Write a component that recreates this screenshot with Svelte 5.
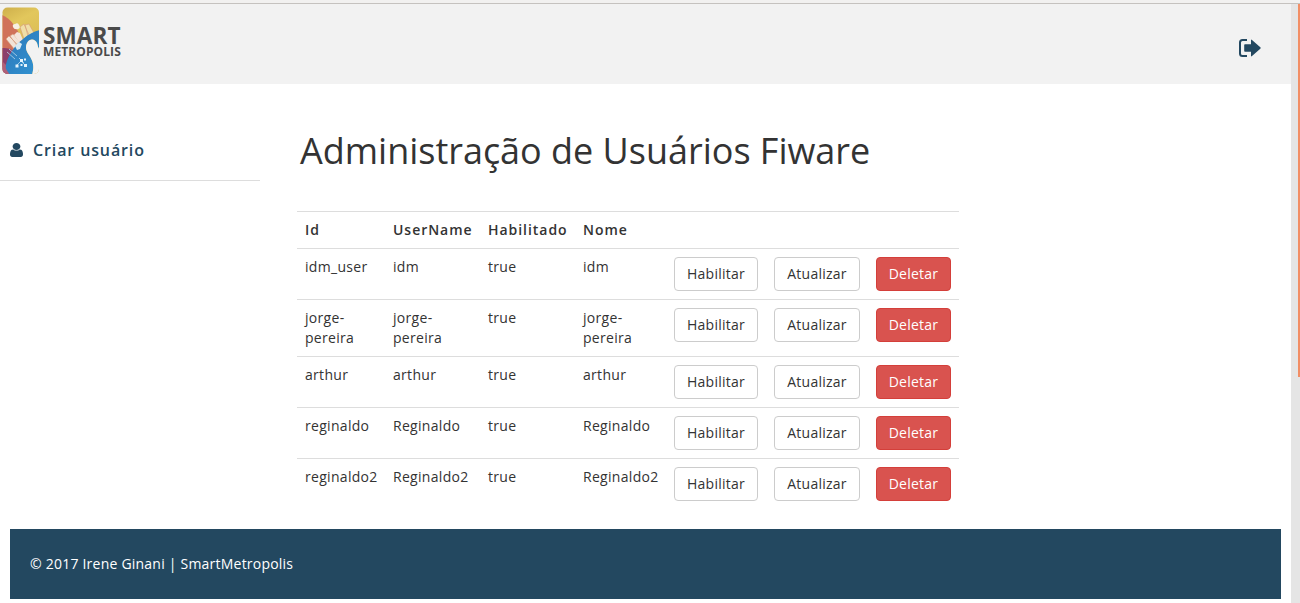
<script>
  const users = [
    ['idm_user', 'idm', 'idm'],
    ['jorge-pereira', 'jorge-pereira', 'jorge-pereira'],
    ['arthur', 'arthur', 'arthur'],
    ['reginaldo', 'Reginaldo', 'Reginaldo'],
    ['reginaldo2', 'Reginaldo2', 'Reginaldo2']
  ];
</script>

<div class="shell">
  <div class="page">
    <header>
      <div class="brand">
        <svg class="mark" width="38" height="68" viewBox="0 0 38 68">
          <defs>
            <clipPath id="card"><rect x="0.5" y="0.5" width="36.500" height="66.500" rx="5" /></clipPath>
            <linearGradient id="gold" x2="0.3" y2="1"><stop stop-color="#cdae4a" /><stop offset=".3" stop-color="#e2c75c" /><stop offset="1" stop-color="#d6b450" /></linearGradient>
            <linearGradient id="blue" x2="1" y2="1"><stop stop-color="#2c76b7" /><stop offset="1" stop-color="#3194d3" /></linearGradient>
          </defs>
          <g clip-path="url(#card)">
            <rect width="38" height="68" fill="url(#gold)" />
            <path d="M0 8C8 11 16 21 20 34L12 50 0 60z" fill="#d0725a" />
            <path d="M0 41C6 41 11 42 13 46L5 68H0z" fill="#8c3f6b" />
            <path d="M0 54l6 6 3 8H0z" fill="#b06078" />
            <g fill="#f3e3d7" stroke="#d59879" stroke-width=".6">
              <path d="M4 32l3-3 10 10-4 4zM8 29l3-2 9 10-4 3z" />
              <path d="M18 20l4-3 5 11-5 4zM23 18l4-1 5 9-6 3z" fill="#f0dfa8" />
            </g>
            <path d="M11 20q-1-3 2-3 3-2 4 1 2 3-1 4-4 1-5-2z" fill="#f7f0e2" />
            <path d="M12 28l3-3 3 1 3 7-4 2z" fill="#f4e4da" />
            <path d="M38 23C27 25 15 36 10 44 5 52 3 58 4 62L8 68H30C33 57 30 53 27 48 24 44 23 40 25 36 28 31 33 32 35 36 36 39 36 41 38 43z" fill="url(#blue)" />
            <path d="M30 68C33 57 30 53 27 48 24 44 23 40 25 36 28 31 33 32 35 36 36 39 36 41 38 43V68z" fill="#f2f2f2" />
            <path d="M13 39l4-4 3 2-2 5-3 1z" fill="#d8eaf4" />
            <path d="M5 45l8 7M7 42l8 7" stroke="#b9d5e9" stroke-width=".8" />
            <path d="M14 59l5-5 5 5M17 51l5 5" stroke="#b9ddf2" stroke-width=".8" fill="none" />
            <path d="M18 52h3v3h-3zM13.500 57.500h3v3h-3zM18.500 57h2v2h-2zM22 57h3v3h-3zM22 51.500h2v2h-2z" fill="#e4f3fb" />
          </g>
        </svg>
        <div class="wordmark"><b>SMART</b><strong>METROPOLIS</strong></div>
      </div>
      <svg class="exit" width="23" height="20" viewBox="0 0 23 20" fill="#234860">
        <path d="M9 2H4.500Q2 2 2 4.500v11Q2 18 4.500 18H9" fill="none" stroke="#234860" stroke-width="2" />
        <path d="M7 6.300h6V2.200Q13 1 14 1.900L22.300 9.300q.8.700 0 1.400L14 18.100q-1 .9-1-.3v-4.100H7q-.8 0-.8-.8V7.100q0-.8.8-.8z" />
      </svg>
    </header>

    <div class="body">
      <aside>
        <a>
          <svg width="13" height="14" viewBox="0 0 1280 1536" preserveAspectRatio="none" fill="#234860"><path d="M1280 1271q0 109-62.500 187t-150.500 78H213q-88 0-150.500-78T0 1271q0-85 8.500-160.500t31.500-152 58.500-131 94-89T327 704q131 128 313 128t313-128q76 0 134.500 34.500t94 89 58.500 131 31.500 152 8.500 160.500zM1024 384q0 159-112.500 271.500T640 768 368.500 655.500 256 384t112.500-271.500T640 0t271.500 112.500T1024 384z" /></svg>
          <span>Criar usuário</span>
        </a>
      </aside>
      <main>
        <h1>Administração de Usuários Fiware</h1>
        <table>
          <colgroup>
            <col class="c88" /><col class="c95" /><col class="c95" /><col class="c91" /><col class="c100" /><col class="c102" /><col class="c91" />
          </colgroup>
          <thead>
            <tr><th>Id</th><th>UserName</th><th>Habilitado</th><th>Nome</th><th></th><th></th><th></th></tr>
          </thead>
          <tbody>
            {#each users as [id, username, name]}
              <tr>
                <td>{id}</td><td>{username}</td><td>true</td><td>{name}</td>
                <td><button>Habilitar</button></td>
                <td><button>Atualizar</button></td>
                <td><button class="danger">Deletar</button></td>
              </tr>
            {/each}
          </tbody>
        </table>
      </main>
    </div>

    <footer>© 2017 Irene Ginani | SmartMetropolis</footer>
  </div>
  <div class="track"><div class="thumb"></div></div>
</div>

<style>
  :global(body) { background: #fff; }
  .shell {
    display: flex;
    box-sizing: border-box;
    height: 603px;
    overflow: hidden;
    border-top: 3px solid #f2f1f0;
    font: 14px/20px "Open Sans", sans-serif;
    color: #333;
  }
  .page { width: 1291px; flex: none; border-top: 1px solid #c5c2bf; box-sizing: border-box; }
  .track { width: 9px; background: #e5e5e5; border-top: 1px solid #c5c2bf; display: flex; justify-content: flex-end; }
  .thumb { width: 2px; height: 373px; background: #f28e65; }
  header { height: 80px; background: #f2f2f2; display: flex; justify-content: space-between; }
  .brand { display: flex; padding: 3px 0 0 2px; }
  .mark { display: block; }
  .wordmark { display: flex; flex-direction: column; padding: 18px 0 0 3px; color: #4a4a4a; white-space: nowrap; }
  .wordmark b { font-size: 22.500px; line-height: 22px; letter-spacing: .1px; }
  .wordmark strong { font-size: 12px; line-height: 11px; letter-spacing: .1px; margin-top: -1px; }
  .exit { margin: 34px 30px 0 0; }
  .body { display: flex; height: 445px; }
  aside { width: 260px; }
  aside a { display: flex; height: 96px; border-bottom: 1px solid #ddd; color: #234860; padding: 0 0 0 10px; box-sizing: content-box; }
  aside svg { margin: 59px 10px 0 0; }
  aside span { font-weight: 600; font-size: 16px; line-height: 22px; margin-top: 55px; letter-spacing: .88px; }
  main { padding: 47px 0 0 37px; }
  h1 { font-size: 36px; line-height: 40px; font-weight: 400; margin: 0 0 40px 3px; white-space: nowrap; letter-spacing: -.02px; }
  table { width: 662px; table-layout: fixed; border-collapse: collapse; }
  .c88 { width: 88px; }
  .c95 { width: 95px; }
  .c91 { width: 91px; }
  .c100 { width: 100px; }
  .c102 { width: 102px; }
  th, td { padding: 8px; border-top: 1px solid #ddd; vertical-align: top; text-align: left; letter-spacing: .3px; }
  th { font-weight: 600; letter-spacing: .96px; white-space: nowrap; }
  button {
    display: block;
    width: 100%;
    height: 34px;
    padding: 0;
    border: 1px solid #ccc;
    border-radius: 4px;
    background: #fff;
    color: #333;
    font: inherit;
    letter-spacing: .25px;
  }
  .danger { background: #d9534f; border-color: #d43f3a; color: #fff; }
  footer { margin: 0 10px; height: 70px; box-sizing: border-box; padding: 25px 20px; background: #234860; color: #fff; letter-spacing: .22px; }
</style>
